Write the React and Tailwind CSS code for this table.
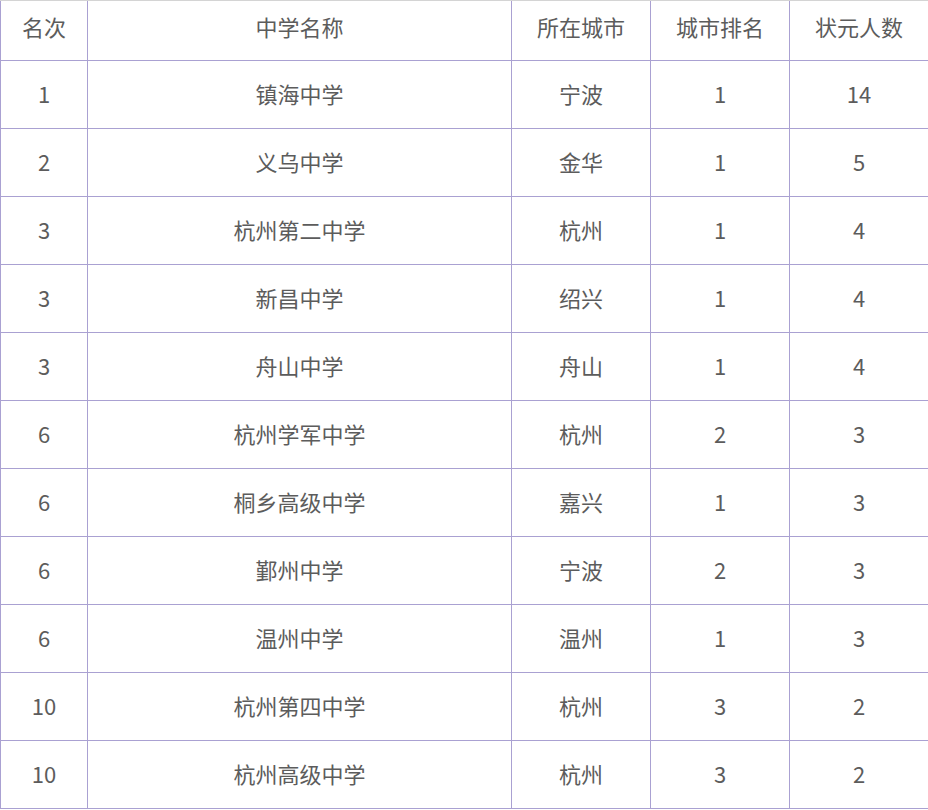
import React from "react";

const rows = [
  ["1", "镇海中学", "宁波", "1", "14"],
  ["2", "义乌中学", "金华", "1", "5"],
  ["3", "杭州第二中学", "杭州", "1", "4"],
  ["3", "新昌中学", "绍兴", "1", "4"],
  ["3", "舟山中学", "舟山", "1", "4"],
  ["6", "杭州学军中学", "杭州", "2", "3"],
  ["6", "桐乡高级中学", "嘉兴", "1", "3"],
  ["6", "鄞州中学", "宁波", "2", "3"],
  ["6", "温州中学", "温州", "1", "3"],
  ["10", "杭州第四中学", "杭州", "3", "2"],
  ["10", "杭州高级中学", "杭州", "3", "2"],
];

const header = ["名次", "中学名称", "所在城市", "城市排名", "状元人数"];
const widths = ["w-[87px]", "w-[424px]", "w-[139px]", "w-[139px]", "w-[139px]"];

function Row({ cells, h }) {
  return (
    <div className="flex border-b border-[#aaa1d2]">
      {cells.map((c, i) => (
        <div
          key={i}
          className={`${widths[i]} ${h} shrink-0 border-l border-[#aaa1d2] flex items-center justify-center`}
        >
          {c}
        </div>
      ))}
    </div>
  );
}

export default function App() {
  return (
    <div
      className="w-[928px] h-[810px] overflow-hidden bg-white text-[#5c5c5c] text-[22px] font-normal"
      style={{ fontFamily: '"Microsoft YaHei", "Noto Sans CJK SC", sans-serif' }}
    >
      <div className="w-[928px] border-t border-[#d4d4d4]">
        <Row cells={header} h="h-[59px] pb-[9px]" />
        {rows.map((r, i) => (
          <Row key={i} cells={r} h="h-[67px] pb-[2px]" />
        ))}
      </div>
    </div>
  );
}
